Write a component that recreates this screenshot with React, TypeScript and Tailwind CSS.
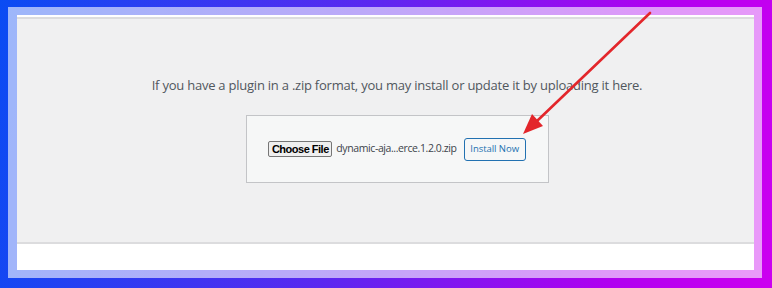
import React from "react";

export default function App() {
  return (
    <div className="relative w-[772px] h-[288px] overflow-hidden bg-[linear-gradient(100deg,#0a4cf3_0%,#5a28f0_45%,#b000f0_80%,#cc00f0_100%)] pt-[7px] pl-[8px] pr-[10px] pb-[10px]">
      <div className="h-full bg-white/60 pt-[8px] pl-[9px] pr-[8px] pb-[8px]">
        <div className="h-full bg-white pt-[2px] flex flex-col">
          <div className="h-[227px] bg-[#f0f0f1] border-t-2 border-b-2 border-[#dcdcde] flex flex-col items-center pl-[23px] pt-[56px]">
            <p className="text-[13px] leading-[20px] text-[#50575e] font-['Open_Sans',sans-serif] tracking-[-0.23px]">
              If you have a plugin in a .zip format, you may install or update it by uploading it here.
            </p>
            <div className="mt-[20px] w-[303px] h-[68px] bg-[#f6f7f7] border border-[#c3c4c7] flex items-center justify-center">
              <button className="h-[16px] w-[64px] bg-[#efefef] border border-[#767676] rounded-[2px] text-[11px] leading-[14px] text-black font-['Liberation_Sans',sans-serif] font-bold tracking-[-0.5px] flex items-center justify-center">
                Choose File
              </button>
              <span className="ml-[4px] text-[10.5px] text-[#3c434a] font-['Open_Sans',sans-serif] tracking-[-0.4px]">
                dynamic-aja...erce.1.2.0.zip
              </span>
              <button className="ml-[7px] h-[23px] w-[62px] bg-[#f6f7f7] border border-[#2271b1] rounded-[3px] text-[9.5px] text-[#2271b1] font-['Open_Sans',sans-serif] tracking-[-0.05px] flex items-center justify-center">
                Install Now
              </button>
            </div>
          </div>
          <div className="flex-1 bg-white" />
        </div>
      </div>
      <svg className="absolute left-0 top-0 pointer-events-none" width="772" height="288" viewBox="0 0 772 288">
        <line x1="650" y1="13" x2="537" y2="121" stroke="#e3262b" strokeWidth="2.6" strokeLinecap="round" />
        <polygon points="523,134 543,126 532,114" fill="#e3262b" />
      </svg>
    </div>
  );
}
